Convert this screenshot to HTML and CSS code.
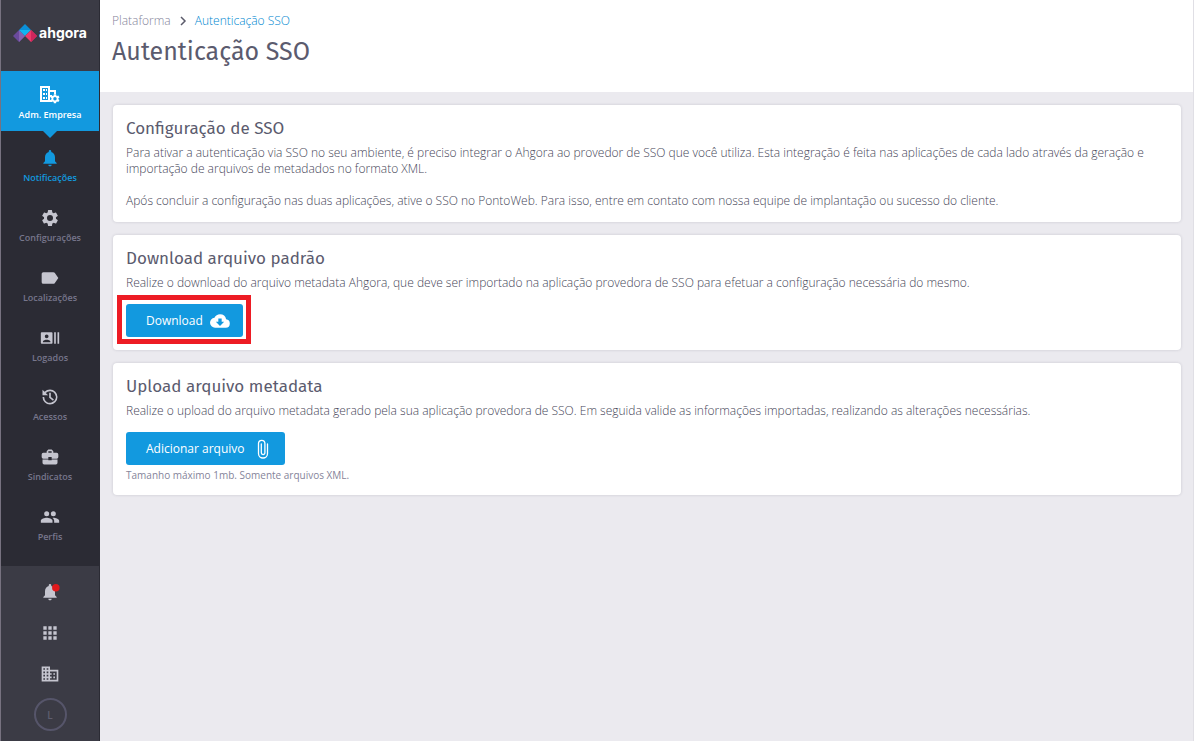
FILE: index.html
```
<!DOCTYPE html>
<html lang="pt-BR">
<head>
    <meta charset="UTF-8">
    <meta name="viewport" content="width=device-width, initial-scale=1.0">
    <title>Autenticação SSO</title>
    <link rel="stylesheet" href="styles.css">
</head>
<body>

    <!-- Sidebar -->
    <aside class="sidebar">
        <a href="#" class="logo">
            <svg width="24" height="18" viewBox="0 0 24 18">
                <path fill="#6a4a9c" d="M6 6 12 12 6 18 0 12z"/>
                <path fill="#8561b0" d="M6 6 12 12 6 18z"/>
                <path fill="#0a8fd8" d="M12 0 18 6 6 6z"/>
                <path fill="#12b4f0" d="M6 6 18 6 12 12z"/>
                <path fill="#ee3a6a" d="M18 6 24 12 18 18 12 12z"/>
                <path fill="#d0265c" d="M18 6 24 12 18 18z"/>
            </svg>
            <span>ahgora</span>
        </a>

        <a href="#" class="menu-item active">
            <svg width="22" height="20" viewBox="0 0 22 20">
                <path fill="#fff" fill-rule="evenodd" d="M1 1h10v4h6v4h-2V7h-4v3h2v2h-2v3h2v2H1zM3 3v12h6V3z"/>
                <path fill="#fff" d="M4 4h2v2H4zM7 4h1v2H7zM4 8h2v2H4zM7 8h1v2H7zM4 12h2v2H4zM7 12h1v2H7z"/>
                <path fill="#fff" transform="translate(10.200 8) scale(.48)" d="M19.140 12.940c.04-.3.06-.61.06-.94s-.02-.64-.07-.94l2.030-1.580a.49.49 0 0 0 .12-.61l-1.920-3.320a.49.49 0 0 0-.59-.22l-2.390.96a7 7 0 0 0-1.620-.94l-.36-2.540a.48.48 0 0 0-.48-.41h-3.840a.48.48 0 0 0-.47.41l-.36 2.540c-.59.24-1.130.57-1.620.94l-2.390-.96a.48.48 0 0 0-.59.22L2.740 8.870a.48.48 0 0 0 .12.61l2.030 1.580c-.05.3-.09.63-.09.94s.02.64.07.94l-2.030 1.580a.49.49 0 0 0-.12.61l1.920 3.320c.12.22.37.29.59.22l2.390-.96c.5.38 1.030.7 1.620.94l.36 2.540c.05.24.24.41.48.41h3.840c.24 0 .44-.17.47-.41l.36-2.540a7 7 0 0 0 1.620-.94l2.390.96c.22.08.47 0 .59-.22l1.920-3.320a.48.48 0 0 0-.12-.61zM12 15.600a3.600 3.600 0 1 1 0-7.200 3.600 3.600 0 0 1 0 7.200z"/>
            </svg>
            <span>Adm. Empresa</span>
        </a>

        <nav class="menu">
            <a href="#" class="menu-item current">
                <svg class="icon" viewBox="0 0 24 24"><path d="M12 22c1.100 0 2-.9 2-2h-4c0 1.100.9 2 2 2zm6-6v-5c0-3.070-1.640-5.640-4.500-6.320V4a1.500 1.500 0 0 0-3 0v.68C7.630 5.360 6 7.920 6 11v5l-2 2v1h16v-1z"/></svg>
                <span>Notificações</span>
            </a>
            <a href="#" class="menu-item">
                <svg class="icon" viewBox="0 0 24 24"><path d="M19.140 12.940c.04-.3.06-.61.06-.94s-.02-.64-.07-.94l2.030-1.580a.49.49 0 0 0 .12-.61l-1.920-3.320a.49.49 0 0 0-.59-.22l-2.390.96a7 7 0 0 0-1.620-.94l-.36-2.540a.48.48 0 0 0-.48-.41h-3.840a.48.48 0 0 0-.47.41l-.36 2.540c-.59.24-1.130.57-1.620.94l-2.390-.96a.48.48 0 0 0-.59.22L2.740 8.870a.48.48 0 0 0 .12.61l2.030 1.580c-.05.3-.09.63-.09.94s.02.64.07.94l-2.030 1.580a.49.49 0 0 0-.12.61l1.920 3.320c.12.22.37.29.59.22l2.390-.96c.5.38 1.030.7 1.620.94l.36 2.540c.05.24.24.41.48.41h3.840c.24 0 .44-.17.47-.41l.36-2.540a7 7 0 0 0 1.620-.94l2.390.96c.22.08.47 0 .59-.22l1.920-3.320a.48.48 0 0 0-.12-.61zM12 15.600a3.600 3.600 0 1 1 0-7.200 3.600 3.600 0 0 1 0 7.200z"/></svg>
                <span>Configurações</span>
            </a>
            <a href="#" class="menu-item">
                <svg class="icon" viewBox="0 0 24 24"><path d="M17.630 5.840A2 2 0 0 0 16 5H4a2 2 0 0 0-2 2v10a2 2 0 0 0 2 2h12c.67 0 1.270-.33 1.630-.84L22 12z"/></svg>
                <span>Localizações</span>
            </a>
            <a href="#" class="menu-item">
                <svg class="icon" viewBox="0 0 24 24"><path d="M21 5v14h2V5zm-4 14h2V5h-2zM14 5H2c-.55 0-1 .45-1 1v12c0 .55.45 1 1 1h12c.55 0 1-.45 1-1V6c0-.55-.45-1-1-1zM8 7.750a2.250 2.250 0 1 1 0 4.500 2.250 2.250 0 0 1 0-4.500zM12.500 17h-9v-.75c0-1.500 3-2.250 4.500-2.250s4.500.75 4.500 2.250z"/></svg>
                <span>Logados</span>
            </a>
            <a href="#" class="menu-item">
                <svg class="icon" viewBox="0 0 24 24"><path d="M12 3a9 9 0 0 0-6.500 2.800L3 3.300V10h6.700L6.900 7.200A7 7 0 1 1 5 12H3a9 9 0 1 0 9-9zm-1 4v6l4.500 3.500 1.200-1.500-3.700-2.900V7z"/></svg>
                <span>Acessos</span>
            </a>
            <a href="#" class="menu-item">
                <svg class="icon" viewBox="0 0 24 24"><path d="M10 16v-1H3.010L3 19a2 2 0 0 0 2 2h14a2 2 0 0 0 2-2v-4h-7v1zm10-9h-4.010V5l-2-2h-4l-2 2v2H4a2 2 0 0 0-2 2v3a2 2 0 0 0 2 2h6v-2h4v2h6a2 2 0 0 0 2-2V9a2 2 0 0 0-2-2zm-6 0h-4V5h4z"/></svg>
                <span>Sindicatos</span>
            </a>
            <a href="#" class="menu-item">
                <svg class="icon" viewBox="0 0 24 24"><path d="M16 11a3 3 0 1 0 0-6 3 3 0 0 0 0 6zm-8 0a3 3 0 1 0 0-6 3 3 0 0 0 0 6zm0 2c-2.330 0-7 1.170-7 3.500V19h14v-2.500C15 14.170 10.330 13 8 13zm8 0c-.29 0-.62.02-.97.05 1.160.84 1.970 1.970 1.970 3.450V19h6v-2.500c0-2.330-4.670-3.500-7-3.500z"/></svg>
                <span>Perfis</span>
            </a>
        </nav>

        <div class="tools">
            <button class="tool" aria-label="Avisos">
                <svg class="icon" viewBox="0 0 24 24"><path d="M12 22c1.100 0 2-.9 2-2h-4c0 1.100.9 2 2 2zm6-6v-5c0-3.070-1.640-5.640-4.500-6.320V4a1.500 1.500 0 0 0-3 0v.68C7.630 5.360 6 7.920 6 11v5l-2 2v1h16v-1z"/><circle cx="19" cy="7" r="4.500" fill="#e0191c"/></svg>
            </button>
            <button class="tool" aria-label="Aplicativos">
                <svg class="icon" viewBox="0 0 24 24"><path d="M4 4h4v4H4zM10 4h4v4h-4zM16 4h4v4h-4zM4 10h4v4H4zM10 10h4v4h-4zM16 10h4v4h-4zM4 16h4v4H4zM10 16h4v4h-4zM16 16h4v4h-4z"/></svg>
            </button>
            <button class="tool" aria-label="Empresas">
                <svg class="icon" viewBox="0 0 24 24"><path d="M12 7V3H2v18h20V7zM6 19H4v-2h2zm0-4H4v-2h2zm0-4H4V9h2zm0-4H4V5h2zm4 12H8v-2h2zm0-4H8v-2h2zm0-4H8V9h2zm0-4H8V5h2zm10 12h-8v-2h2v-2h-2v-2h2v-2h-2V9h8zm-2-8h-2v2h2zm0 4h-2v2h2z"/></svg>
            </button>
            <button class="avatar">L</button>
        </div>
    </aside>

    <div class="page">
        <header class="header">
            <div class="breadcrumb">
                <a href="#">Plataforma</a>
                <svg width="8" height="10" viewBox="0 0 8 10"><path d="M2 1l4 4-4 4" fill="none" stroke="#5b5b6b" stroke-width="1.500"/></svg>
                <a href="#" class="here">Autenticação SSO</a>
            </div>
            <h1>Autenticação SSO</h1>
        </header>

        <main class="content">
            <section class="card">
                <h2>Configuração de SSO</h2>
                <p>Para ativar a autenticação via SSO no seu ambiente, é preciso integrar o Ahgora ao provedor de SSO que você utiliza. Esta integração é feita nas aplicações de cada lado através da geração e importação de arquivos de metadados no formato XML.</p>
                <p>Após concluir a configuração nas duas aplicações, ative o SSO no PontoWeb. Para isso, entre em contato com nossa equipe de implantação ou sucesso do cliente.</p>
            </section>

            <section class="card">
                <h2>Download arquivo padrão</h2>
                <p>Realize o download do arquivo metadata Ahgora, que deve ser importado na aplicação provedora de SSO para efetuar a configuração necessária do mesmo.</p>
                <button class="btn highlight">
                    Download
                    <svg width="20" height="20" viewBox="0 0 24 24"><path fill="#fff" d="M19.350 10.040A7.490 7.490 0 0 0 12 4C9.110 4 6.600 5.640 5.350 8.040A6 6 0 0 0 6 20h13a5 5 0 0 0 .35-9.960zM17 13l-5 5-5-5h3V9h4v4z"/></svg>
                </button>
            </section>

            <section class="card">
                <h2>Upload arquivo metadata</h2>
                <p>Realize o upload do arquivo metadata gerado pela sua aplicação provedora de SSO. Em seguida valide as informações importadas, realizando as alterações necessárias.</p>
                <button class="btn btn-attach">
                    Adicionar arquivo
                    <svg width="12" height="20" viewBox="0 0 12 20"><path fill="none" stroke="#fff" stroke-width="1.300" stroke-linecap="round" d="M10.500 5v9.500a4.500 4.500 0 0 1-9 0V4.500a3.200 3.200 0 0 1 6.400 0v9.300a1.800 1.800 0 0 1-3.600 0V5"/></svg>
                </button>
                <small class="note">Tamanho máximo 1mb. Somente arquivos XML.</small>
            </section>
        </main>
    </div>

</body>
</html>
```
FILE: styles.css
```
* {
    box-sizing: border-box;
}
body {
    margin: 0;
    display: flex;
    min-height: 100vh;
    font-family: "Open Sans", sans-serif;
    font-size: 12px;
    font-weight: 300;
    line-height: 16px;
    color: #464658;
    background-color: #ebeaef;
}
a {
    color: inherit;
    text-decoration: none;
}
button {
    font-family: inherit;
    border: none;
    cursor: pointer;
}

/* Sidebar */
.sidebar {
    display: flex;
    flex-direction: column;
    flex-shrink: 0;
    width: 100px;
    background-color: #2b2b34;
    border-left: 1px solid #777280;
    border-right: 1px solid #2b2b34;
}
.logo {
    display: flex;
    align-items: center;
    justify-content: center;
    gap: 2px;
    height: 71px;
    padding-bottom: 5px;
    background-color: #3b3b45;
    color: #fff;
    font-size: 14px;
    font-family: Inter, sans-serif;
    font-weight: 700;
}
.menu {
    display: flex;
    flex-direction: column;
    flex: 1;
    padding: 6px 0 11px;
}
.menu-item {
    display: flex;
    flex-direction: column;
    align-items: center;
    justify-content: center;
    gap: 3px;
    flex: 1;
    max-height: 60px;
    font-size: 9px;
    line-height: 14px;
    font-weight: 600;
    color: #77768c;
}
.menu-item.active {
    position: relative;
    flex: none;
    height: 60px;
    padding-top: 4px;
    color: #fff;
    background-color: #1299df;
}
.menu-item.active::after {
    content: "";
    position: absolute;
    top: 100%;
    left: 50%;
    margin-left: -7px;
    border: 7px solid transparent;
    border-top-color: #1299df;
    border-bottom: none;
}
.menu-item.current {
    color: #1299df;
}
.icon {
    width: 20px;
    height: 20px;
    fill: #c5c5cf;
}
.current .icon {
    fill: #1299df;
}
.tools {
    display: flex;
    flex-direction: column;
    align-items: center;
    padding: 5px 0 10px;
    background-color: #3b3b45;
}
.tool {
    display: flex;
    align-items: center;
    justify-content: center;
    width: 41px;
    height: 41px;
    padding: 0;
    background: none;
}
.avatar {
    width: 33px;
    height: 33px;
    margin-top: 4px;
    padding: 0;
    border: 2px solid #56556a;
    border-radius: 50%;
    background: none;
    color: #5f5e70;
    font-size: 10px;
    font-weight: 600;
}

/* Page */
.page {
    flex: 1;
    min-width: 0;
    border-right: 1px solid #e0dfe5;
}
.header {
    padding: 13px 12px 22px;
    background-color: #fff;
}
.breadcrumb {
    display: flex;
    align-items: center;
    gap: 8px;
    color: #85849a;
}
.breadcrumb .here {
    color: #0088d0;
}
h1, h2 {
    margin: 0;
    font-family: "Fira Sans", "Noto Sans", sans-serif;
    font-weight: 400;
    color: #5b5b6e;
}
h1 {
    margin-top: 5px;
    font-size: 25px;
    line-height: 36px;
}
.content {
    display: flex;
    flex-direction: column;
    gap: 13px;
    padding: 13px 12px 13px 13px;
}
.card {
    padding: 12px 13px 13px;
    background-color: #fff;
    border-radius: 4px;
    box-shadow: 0 0 3px rgba(60, 60, 80, 0.2);
}
h2 {
    margin-bottom: 4px;
    font-size: 17px;
    line-height: 24px;
}
p {
    margin: 0;
}
p + p {
    margin-top: 16px;
}
.btn {
    display: flex;
    align-items: center;
    gap: 7px;
    height: 33px;
    margin-top: 13px;
    padding: 0 13px 0 20px;
    border-radius: 3px;
    background-color: #1299df;
    color: #fff;
    font-size: 12px;
    font-weight: 500;
}
.btn-attach {
    gap: 12px;
    padding-right: 16px;
}
.highlight {
    position: relative;
}
.highlight::after {
    content: "";
    position: absolute;
    inset: -9px -8px -7px -9px;
    border: 5px solid #ed1c24;
}
.note {
    display: block;
    margin-top: 3px;
    font-size: 10px;
    font-weight: 400;
    line-height: 14px;
    color: #85849a;
}
```
